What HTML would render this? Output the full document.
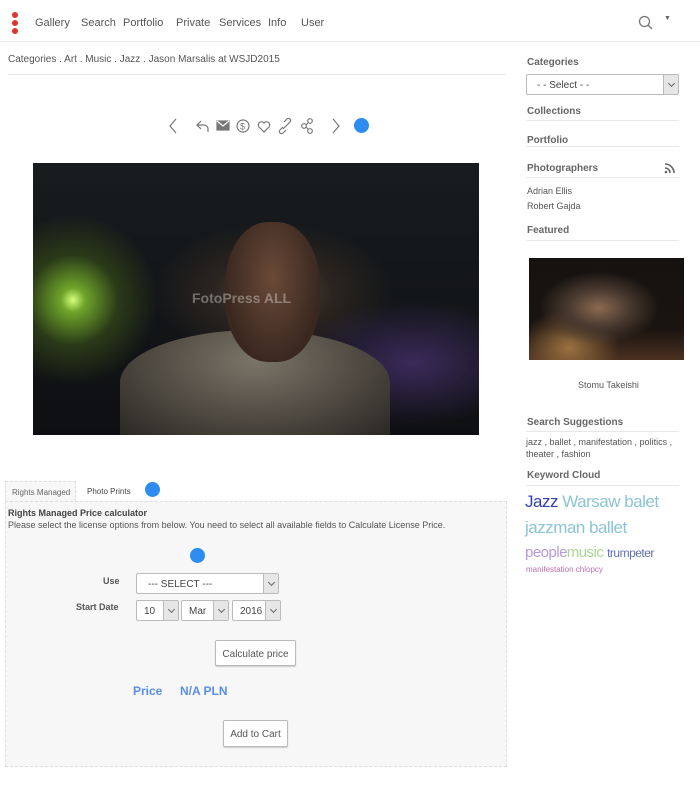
<!DOCTYPE html>
<html><head><meta charset="utf-8"><style>
*{box-sizing:border-box;margin:0;padding:0}
body{width:700px;height:785px;background:#fff;font-family:"Liberation Sans",sans-serif;color:#555;position:relative;overflow:hidden;font-size:11px}
.a{position:absolute}
.nav span{position:absolute;top:17px;font-size:11px;color:#555}
.hd{font-weight:bold;color:#666;font-size:10px}
.ln{position:absolute;height:1px;background:#e8e8e8}
.sel{position:absolute;border:1px solid #bbb;background:#fff;border-radius:2px;font-size:10px;color:#444}
.sel b{position:absolute;right:0;top:0;bottom:0;width:15px;background:#e6e6e6;border-left:1px solid #bbb}
.sel b:after{content:"";position:absolute;left:5px;top:6px;width:4px;height:4px;border-right:1px solid #666;border-bottom:1px solid #666;transform:rotate(45deg)}
.btn{position:absolute;border:1px solid #bbb;background:#fff;border-radius:2px;font-size:10px;color:#555;text-align:center;box-shadow:0 1px 1px #ccc}
.dot{position:absolute;border-radius:50%;background:#2e8cf0}
</style></head><body>
<div class="a" style="left:12px;top:12px;width:6px;height:6px;border-radius:50%;background:#d33"></div>
<div class="a" style="left:12px;top:20px;width:6px;height:6px;border-radius:50%;background:#d33"></div>
<div class="a" style="left:12px;top:28px;width:6px;height:6px;border-radius:50%;background:#d33"></div>
<div class="nav"><span style="left:35px">Gallery</span><span style="left:81px">Search</span><span style="left:123px">Portfolio</span><span style="left:176px">Private</span><span style="left:219px">Services</span><span style="left:268px">Info</span><span style="left:301px">User</span></div>
<svg class="a" style="left:638px;top:15px" width="16" height="16"><circle cx="6.5" cy="6.5" r="5" fill="none" stroke="#777" stroke-width="1.3"/><line x1="10" y1="10" x2="14" y2="14" stroke="#777" stroke-width="1.3"/></svg>
<div class="a" style="left:664px;top:15px;font-size:7px;color:#666">▼</div>
<div class="ln" style="left:0;top:41px;width:700px"></div>
<div class="a" style="left:8px;top:54px;font-size:10px;color:#555">Categories . Art . Music . Jazz . Jason Marsalis at WSJD2015</div>
<div class="ln" style="left:8px;top:74px;width:498px"></div>
<svg class="a" style="left:165px;top:116px" width="200" height="20" fill="none" stroke="#777" stroke-width="1.2">
<path d="M11 3l-6 7 6 7"/><path d="M36 5l-4 4 4 4M32 9h7a4 4 0 0 1 4 4v3"/>
<rect x="52" y="5" width="12" height="9" fill="#777"/><path d="M52 5l6 5 6-5" stroke="#fff"/>
<circle cx="78" cy="10" r="6"/><text x="75" y="13.5" font-size="9" fill="#777" stroke="none">$</text>
<path d="M99 16l-5-5a3 3 0 0 1 5-4 3 3 0 0 1 5 4z"/>
<path d="M118 11l-3 3a2 2 0 0 0 3 3l3-3M122 9l3-3a2 2 0 0 0-3-3l-3 3M118 13l5-5"/>
<circle cx="139" cy="10" r="2.3"/><circle cx="145" cy="5" r="2.3"/><circle cx="145" cy="15" r="2.3"/><path d="M141 9l2-2M141 11l2 2"/>
<path d="M168 3l6 7-6 7"/></svg>
<div class="dot" style="left:354px;top:118px;width:15px;height:15px"></div>
<div class="a" style="left:33px;top:163px;width:446px;height:272px;background:radial-gradient(circle at 40px 137px,#d8ff7a 0,#6fa52a 12px,#2a3a18 45px,transparent 85px),radial-gradient(ellipse at 380px 200px,#3a2a5a 0,transparent 120px),radial-gradient(ellipse at 240px 130px,#5a4a3a 0,#2a2420 60px,transparent 120px),linear-gradient(#181c1e,#0e0f12)"></div>
<div class="a" style="left:120px;top:330px;width:270px;height:105px;border-radius:50% 50% 0 0;background:radial-gradient(ellipse at 50% 30%,#7a7468 0,#4b463e 60%,#2a2824)"></div>
<div class="a" style="left:225px;top:222px;width:95px;height:140px;border-radius:45%;background:radial-gradient(ellipse at 50% 40%,#6a4a38,#3a2820 70%)"></div>
<div class="a" style="left:192px;top:290px;font-size:14px;color:rgba(255,255,255,.35);font-weight:bold">FotoPress ALL</div>
<div class="a" style="left:5px;top:481px;width:71px;height:21px;border:1px dashed #ddd;border-bottom:none;background:#f7f7f7;font-size:8px;color:#666;padding:6px 0 0 6px">Rights Managed</div>
<div class="a" style="left:87px;top:487px;font-size:8px;color:#444">Photo Prints</div>
<div class="dot" style="left:145px;top:482px;width:15px;height:15px"></div>
<div class="a" style="left:5px;top:501px;width:502px;height:266px;border:1px dashed #ddd;background:#f7f7f7"></div>
<div class="a" style="left:8px;top:508px;font-size:9px;color:#444;font-weight:bold">Rights Managed Price calculator</div>
<div class="a" style="left:8px;top:520px;font-size:9px;color:#555">Please select the license options from below. You need to select all available fields to Calculate License Price.</div>
<div class="dot" style="left:190px;top:548px;width:15px;height:15px"></div>
<div class="a hd" style="left:103px;top:576px;font-size:9px;color:#555">Use</div>
<div class="a hd" style="left:76px;top:602px;font-size:9px;color:#555">Start Date</div>
<div class="sel" style="left:136px;top:573px;width:143px;height:21px;padding:5px 0 0 11px">--- SELECT ---<b></b></div>
<div class="sel" style="left:136px;top:600px;width:43px;height:21px;padding:5px 0 0 7px">10<b></b></div>
<div class="sel" style="left:181px;top:600px;width:48px;height:21px;padding:5px 0 0 7px">Mar<b></b></div>
<div class="sel" style="left:232px;top:600px;width:49px;height:21px;padding:5px 0 0 7px">2016<b></b></div>
<div class="btn" style="left:215px;top:640px;width:81px;height:26px;padding-top:8px">Calculate price</div>
<div class="a" style="left:133px;top:684px;font-size:12px;font-weight:bold;color:#5a8fe8">Price</div>
<div class="a" style="left:180px;top:684px;font-size:12px;font-weight:bold;color:#5a8fe8">N/A PLN</div>
<div class="btn" style="left:223px;top:720px;width:65px;height:27px;padding-top:8px">Add to Cart</div>
<div class="a hd" style="left:527px;top:57px">Categories</div>
<div class="sel" style="left:526px;top:74px;width:153px;height:21px;padding:5px 0 0 10px">- - Select - -<b></b></div>
<div class="a hd" style="left:527px;top:106px">Collections</div><div class="ln" style="left:526px;top:120px;width:153px"></div>
<div class="a hd" style="left:527px;top:135px">Portfolio</div><div class="ln" style="left:526px;top:146px;width:153px"></div>
<div class="a hd" style="left:527px;top:163px">Photographers</div><div class="ln" style="left:526px;top:177px;width:153px"></div>
<svg class="a" style="left:664px;top:163px" width="11" height="11" fill="none" stroke="#666" stroke-width="1.6"><path d="M1 5a5 5 0 0 1 5 5M1 1a9 9 0 0 1 9 9"/><circle cx="2" cy="9" r="1.3" fill="#666" stroke="none"/></svg>
<div class="a" style="left:527px;top:186px;font-size:9px">Adrian Ellis</div>
<div class="a" style="left:527px;top:201px;font-size:9px">Robert Gajda</div>
<div class="a hd" style="left:527px;top:225px">Featured</div><div class="ln" style="left:526px;top:240px;width:153px"></div>
<div class="a" style="left:529px;top:258px;width:155px;height:102px;background:radial-gradient(ellipse at 70px 50px,#8a6a50 0,#4a3a30 30px,transparent 60px),radial-gradient(ellipse at 40px 90px,#9a7040,transparent 50px),linear-gradient(#151210,#1a1410 70%,#4a3020)"></div>
<div class="a" style="left:578px;top:380px;font-size:9px">Stomu Takeishi</div>
<div class="a hd" style="left:527px;top:417px">Search Suggestions</div><div class="ln" style="left:526px;top:431px;width:153px"></div>
<div class="a" style="left:526px;top:436px;font-size:9px;line-height:12px;width:150px">jazz , ballet , manifestation , politics , theater , fashion</div>
<div class="a hd" style="left:527px;top:470px">Keyword Cloud</div><div class="ln" style="left:526px;top:485px;width:153px"></div>
<div class="a" style="left:525px;top:492px;font-size:17px;letter-spacing:-0.5px;color:#99c"><span style="color:#3340b0">Jazz</span> <span style="color:#8cc4d4">Warsaw balet</span></div>
<div class="a" style="left:525px;top:518px;font-size:17px;letter-spacing:-0.5px;color:#8cc4d4">jazzman ballet</div>
<div class="a" style="left:525px;top:544px;font-size:15px;letter-spacing:-0.5px;color:#b898d8">people <span style="color:#a8d890;margin-left:-4px">music</span> <span style="color:#6070b0;font-size:12px">trumpeter</span></div>
<div class="a" style="left:526px;top:565px;font-size:8px;color:#c070b0">manifestation chlopcy</div>
</body></html>
